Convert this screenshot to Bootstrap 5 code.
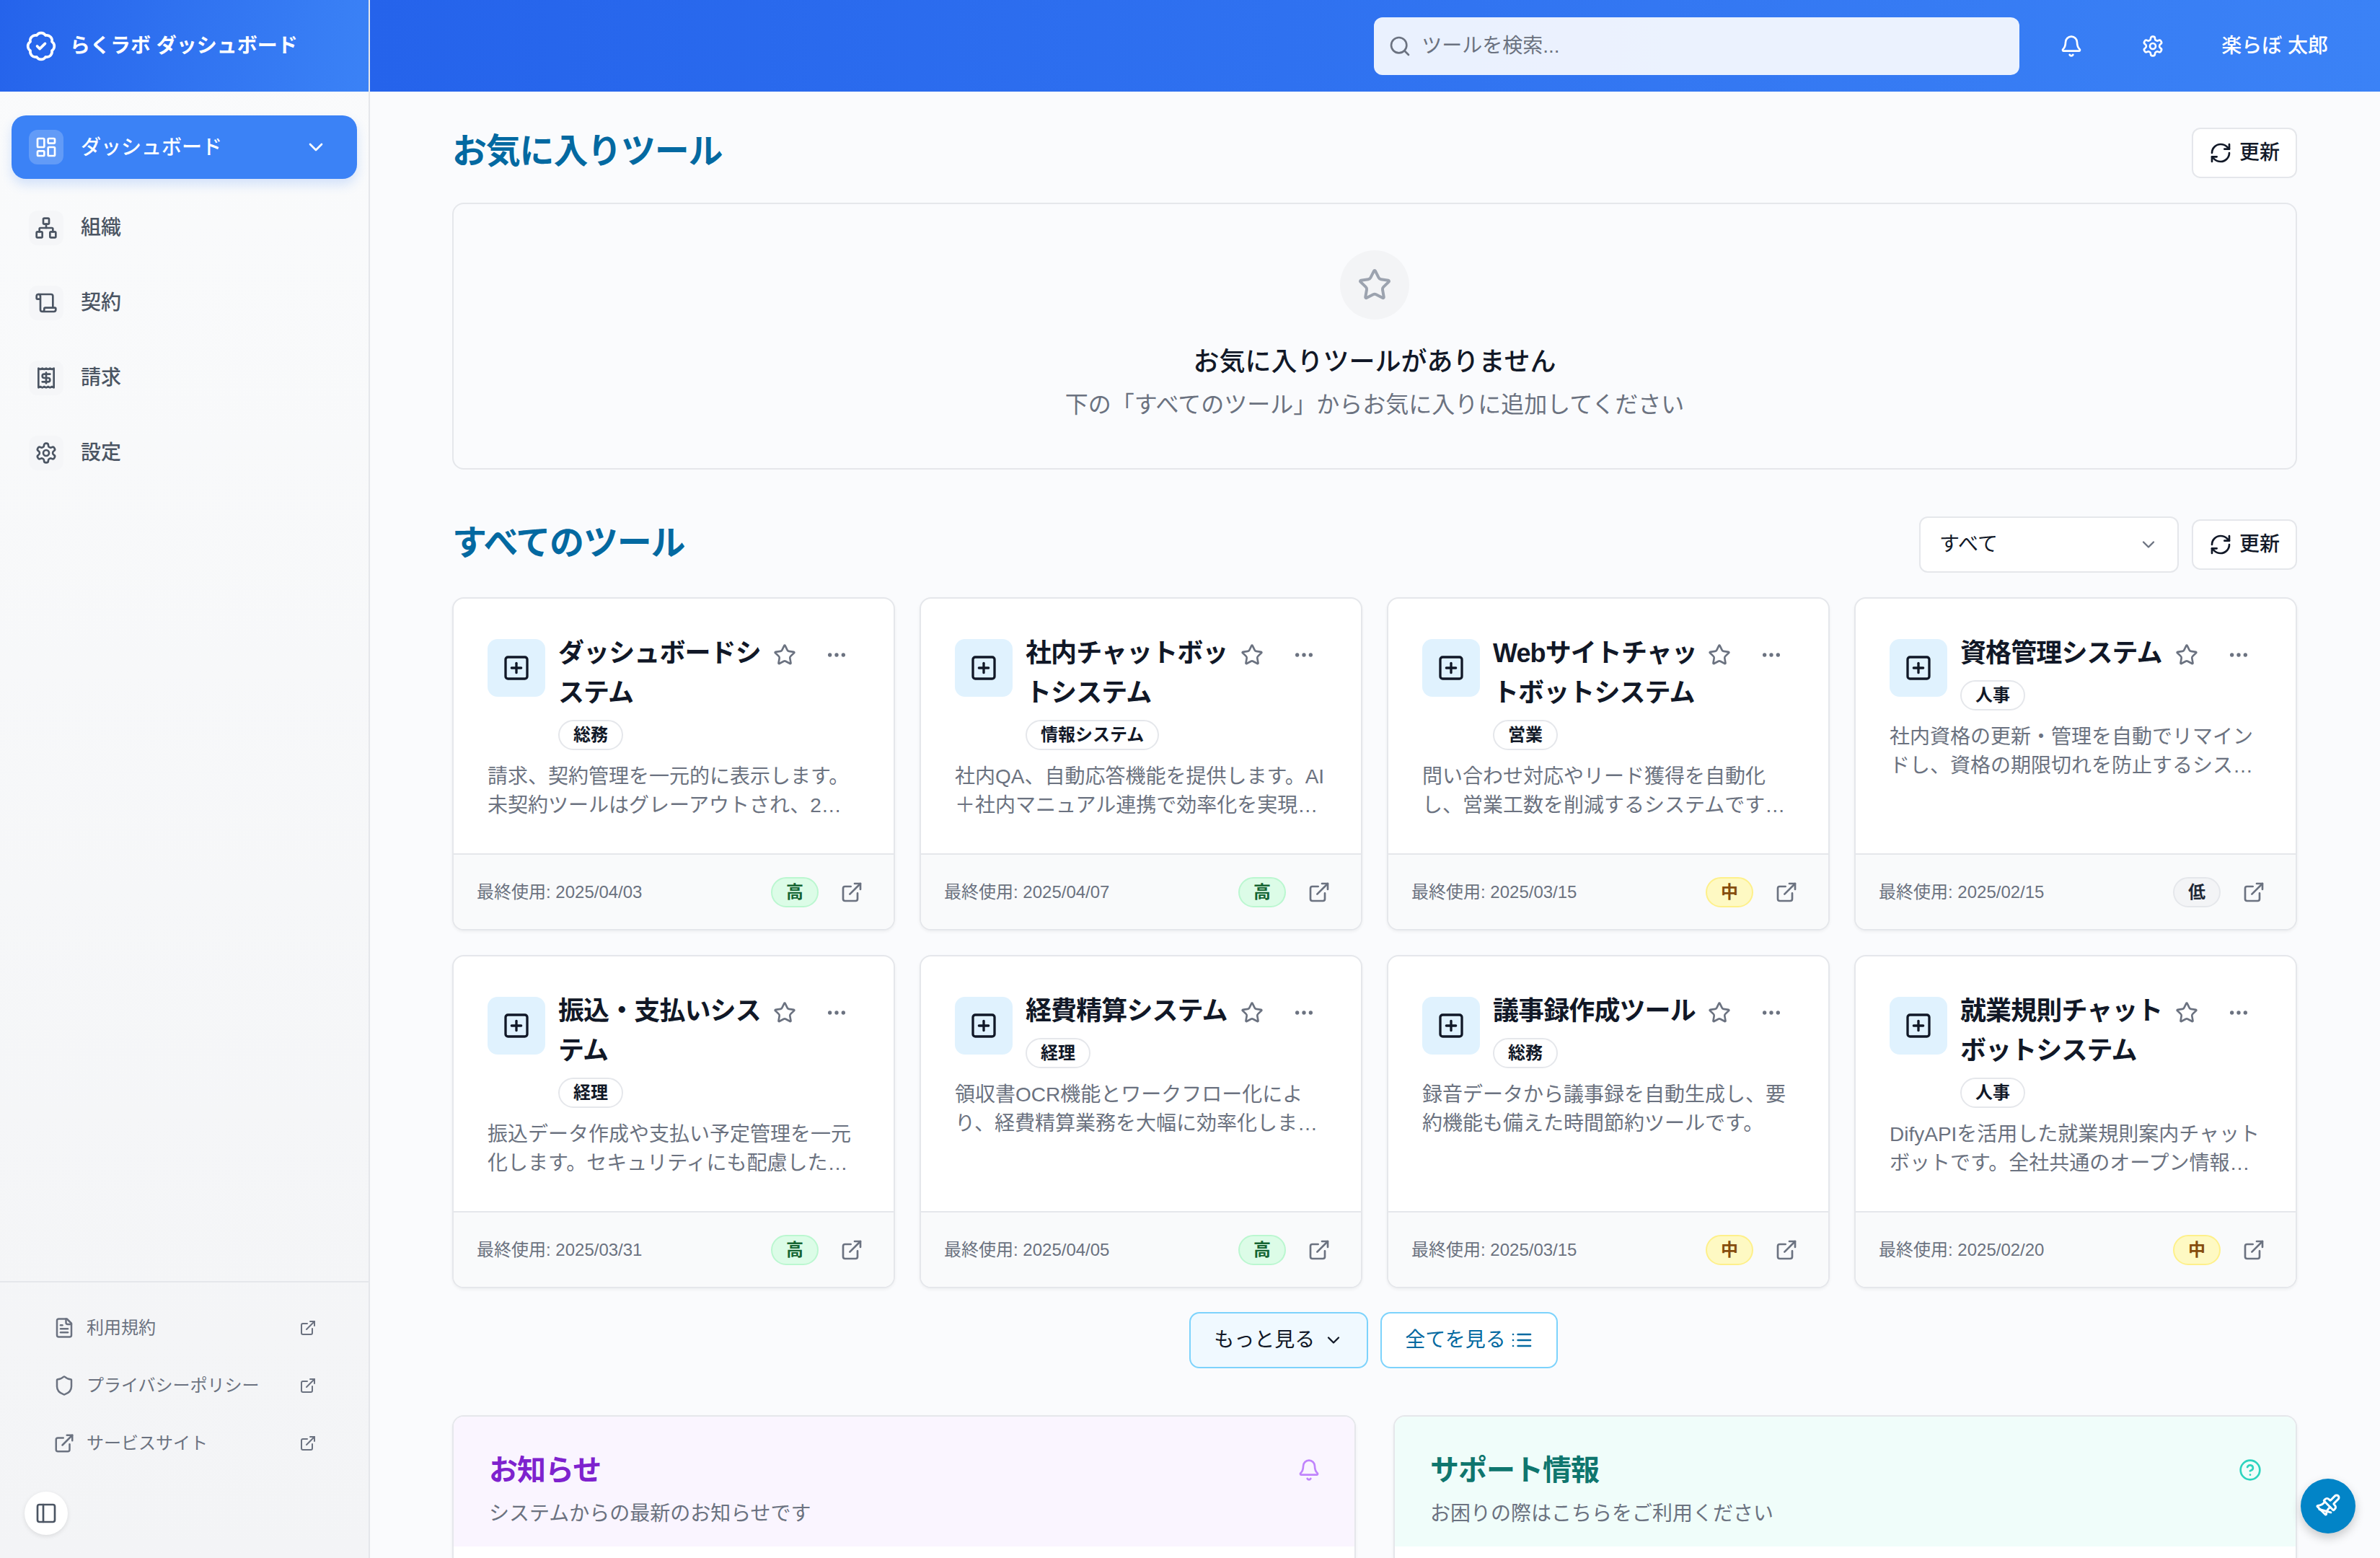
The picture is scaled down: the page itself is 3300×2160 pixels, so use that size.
<!DOCTYPE html>
<html lang="ja">
<head>
    <meta charset="UTF-8">
    <meta name="viewport" content="width=device-width, initial-scale=1.0">
    <title>らくラボ ダッシュボード</title>
    <link href="https://cdn.jsdelivr.net/npm/bootstrap@5.3.0/dist/css/bootstrap.min.css" rel="stylesheet">
    <style>
        html, body { height: 2160px; overflow: hidden; }
        body {
            font-family: "Liberation Sans", "Noto Sans CJK JP", sans-serif;
            font-size: 28px;
            color: #111827;
            background: #fafbfd;
        }
        svg.ico { fill: none; stroke: currentColor; stroke-width: 2; stroke-linecap: round; stroke-linejoin: round; flex-shrink: 0; display: block; }
        .s24 { width: 24px; height: 24px; }
        .s28 { width: 28px; height: 28px; }
        .s30 { width: 30px; height: 30px; }
        .s32 { width: 32px; height: 32px; }
        .s36 { width: 36px; height: 36px; }
        .s40 { width: 40px; height: 40px; }
        .s44 { width: 44px; height: 44px; }
        .s48 { width: 48px; height: 48px; }

        /* sidebar */
        .sidebar { width: 513px; height: 2160px; background: linear-gradient(180deg, #fafbfc, #f3f4f6); border-right: 2px solid #e5e7eb; }
        .brand { height: 127px; padding-left: 35px; gap: 18px; color: #fff; font-weight: 600; background: linear-gradient(100deg, #2563eb, #3b82f6); }
        .side-nav { padding: 33px 16px 0; }
        .side-link { height: 88px; padding: 0 24px; gap: 24px; border-radius: 20px; color: #4b5563; font-weight: 500; margin-bottom: 16px; text-decoration: none; }
        .side-link.active { background: #3b82f6; color: #fff; margin-bottom: 24px; box-shadow: 0 8px 16px rgba(59,130,246,.2); }
        .side-link.active > svg { margin-right: 17px; }
        .side-link.active .side-label { padding-top: 2px; }
        .side-icon { width: 48px; height: 48px; border-radius: 12px; background: #f5f6f8; }
        .active .side-icon { background: rgba(255,255,255,.2); }
        .side-foot { border-top: 2px solid #e5e7eb; padding: 23px 0 0; height: 384px; }
        .foot-link { height: 80px; padding: 0 72px 0 74px; gap: 16px; color: #6b7280; font-size: 24px; text-decoration: none; }
        .toggle { width: 60px; height: 60px; margin: 27px 0 0 34px; background: #fff; color: #4b5563; box-shadow: 0 2px 6px rgba(0,0,0,.1); }

        /* header */
        .topbar { height: 127px; padding-right: 72px; background: linear-gradient(90deg, #2563eb, #3b82f6); color: #fff; }
        .search { width: 895px; height: 80px; border-radius: 12px; background: rgba(255,255,255,.9); color: #6b7280; padding-left: 20px; gap: 14px; }
        .search input { border: 0; background: transparent; padding: 0; font-size: 28px; box-shadow: none; }
        .search input::placeholder { color: #6b7280; }
        .name { font-weight: 500; }

        /* main */
        .content { padding: 50px 115px 0 114px; }
        .section-title { font-size: 48px; font-weight: 700; color: #0369a1; margin: 0; padding-bottom: 4px; letter-spacing: -.025em; }
        .btn-plain { height: 70px; padding: 0 22px; gap: 10px; background: #fff; color: #111827; border: 2px solid #e5e7eb; border-radius: 12px; font-size: 28px; font-weight: 500; }
        .empty { height: 370px; background: transparent; border: 2px solid #e5e7eb; border-radius: 16px; }
        .empty-icon { width: 96px; height: 96px; background: #f3f4f6; color: #9ca3af; margin-top: 64px; }
        .empty h3 { font-size: 36px; line-height: 54px; font-weight: 500; margin: 32px 0 0; }
        .empty p { font-size: 32px; line-height: 48px; color: #6b7280; margin: 8px 0 0; }
        .filter { width: 360px; height: 78px; font-size: 28px; padding: 0 26px; border: 2px solid #e5e7eb; border-radius: 12px; color: #111827; --bs-form-select-bg-img: none;
            background-image: url("data:image/svg+xml,%3csvg xmlns='http://www.w3.org/2000/svg' viewBox='0 0 24 24' fill='none' stroke='%236b7280' stroke-width='2' stroke-linecap='round' stroke-linejoin='round'%3e%3cpath d='m6 9 6 6 6-6'/%3e%3c/svg%3e");
            background-size: 28px; background-position: right 26px center; }

        .tools { --bs-gutter-x: 34px; --bs-gutter-y: 34px; }
        .tool { height: 462px; border: 2px solid #e5e7eb; border-radius: 16px; box-shadow: 0 2px 4px rgba(0,0,0,.05); overflow: hidden; }
        .tool-body { padding: 48px 46px 0 47px; }
        .tool-icon { width: 80px; height: 80px; margin: 8px 18px 0 0; border-radius: 14px; background: #e0f2fe; }
        .tool h5 { width: 292px; font-size: 36px; line-height: 55px; font-weight: 600; margin: 0; letter-spacing: -.025em; }
        .tool-actions { gap: 40px; margin: 14px 0 0 6px; color: #6b7280; }
        .dept { height: 42px; margin-top: 10px; padding: 0 19px; background: #fff; color: #111827; font-size: 24px; font-weight: 600; border: 2px solid #e5e7eb; line-height: 38px; }
        .desc { font-size: 28px; line-height: 40px; color: #6b7280; margin: 17px 0 0; }
        .tool-foot { height: 105px; padding: 0 30px 0 32px; background: #f9fafb; border-top: 2px solid #e5e7eb; color: #6b7280; font-size: 24px; }
        .prio { width: 66px; height: 42px; line-height: 38px; padding: 0; font-size: 24px; font-weight: 600; border: 2px solid; margin-right: 30px; }
        .prio-high { background: #dcfce7; border-color: #bbf7d0; color: #166534; }
        .prio-mid { background: #fef9c3; border-color: #fef08a; color: #854d0e; }
        .prio-low { background: #f3f4f6; border-color: #e5e7eb; color: #1f2937; }
        .more-row { margin-top: 33px; gap: 17px; padding-right: 3px; }
        .btn-more { height: 78px; padding: 0 32px; gap: 12px; font-size: 28px; border: 2px solid #7dd3fc; border-radius: 14px; background: #f0f9ff; color: #111827; }
        .btn-all { background: #fff; color: #0369a1; gap: 6px; }
        .info { margin-top: 65px; gap: 52px; }
        .info-card { flex: 1; height: 198px; border: 2px solid #e5e7eb; border-bottom: 0; border-radius: 16px 16px 0 0; overflow: hidden; background: #fff; box-shadow: 0 2px 4px rgba(0,0,0,.05); }
        .info-head { height: 180px; padding: 44px 49px 0; }
        .info-head h4 { font-size: 40px; line-height: 60px; font-weight: 700; margin: 0; letter-spacing: -.025em; }
        .info-head p { font-size: 28px; line-height: 42px; color: #6b7280; margin: 10px 0 0; }
        .info-head svg { margin-right: -2px; }
        .purple { background: #faf5ff; }
        .purple h4 { color: #7e22ce; }
        .purple svg { color: #c084fc; }
        .teal { background: #f0fdfa; }
        .teal h4 { color: #0f766e; }
        .teal svg { color: #2dd4bf; }
        .fab { position: fixed; right: 34px; bottom: 34px; width: 76px; height: 76px; background: #0284c7; color: #fff; box-shadow: 0 6px 14px rgba(0,0,0,.2); }
    </style>
</head>
<body>
    <!-- icon set -->
    <svg class="d-none">
        <symbol id="i-badge" viewBox="0 0 24 24"><path d="M3.85 8.62a4 4 0 0 1 4.78-4.77 4 4 0 0 1 6.74 0 4 4 0 0 1 4.78 4.78 4 4 0 0 1 0 6.74 4 4 0 0 1-4.77 4.78 4 4 0 0 1-6.75 0 4 4 0 0 1-4.78-4.77 4 4 0 0 1 0-6.76Z"/><path d="m9 12 2 2 4-4"/></symbol>
        <symbol id="i-dash" viewBox="0 0 24 24"><rect x="3" y="3" width="7" height="9" rx="1"/><rect x="14" y="3" width="7" height="5" rx="1"/><rect x="14" y="12" width="7" height="9" rx="1"/><rect x="3" y="16" width="7" height="5" rx="1"/></symbol>
        <symbol id="i-network" viewBox="0 0 24 24"><rect x="16" y="16" width="6" height="6" rx="1"/><rect x="2" y="16" width="6" height="6" rx="1"/><rect x="9" y="2" width="6" height="6" rx="1"/><path d="M5 16v-3a1 1 0 0 1 1-1h12a1 1 0 0 1 1 1v3"/><path d="M12 12V8"/></symbol>
        <symbol id="i-scroll" viewBox="0 0 24 24"><path d="M19 17V5a2 2 0 0 0-2-2H4"/><path d="M8 21h12a2 2 0 0 0 2-2v-1a1 1 0 0 0-1-1H11a1 1 0 0 0-1 1v1a2 2 0 1 1-4 0V5a2 2 0 1 0-4 0v2a1 1 0 0 0 1 1h3"/></symbol>
        <symbol id="i-receipt" viewBox="0 0 24 24"><path d="M4 2v20l2-1 2 1 2-1 2 1 2-1 2 1 2-1 2 1V2l-2 1-2-1-2 1-2-1-2 1-2-1-2 1Z"/><path d="M16 8h-6a2 2 0 1 0 0 4h4a2 2 0 1 1 0 4H8"/><path d="M12 17.5v-11"/></symbol>
        <symbol id="i-gear" viewBox="0 0 24 24"><path d="M12.22 2h-.44a2 2 0 0 0-2 2v.18a2 2 0 0 1-1 1.73l-.43.25a2 2 0 0 1-2 0l-.15-.08a2 2 0 0 0-2.73.73l-.22.38a2 2 0 0 0 .73 2.73l.15.1a2 2 0 0 1 1 1.72v.51a2 2 0 0 1-1 1.74l-.15.09a2 2 0 0 0-.73 2.73l.22.38a2 2 0 0 0 2.73.73l.15-.08a2 2 0 0 1 2 0l.43.25a2 2 0 0 1 1 1.73V20a2 2 0 0 0 2 2h.44a2 2 0 0 0 2-2v-.18a2 2 0 0 1 1-1.73l.43-.25a2 2 0 0 1 2 0l.15.08a2 2 0 0 0 2.73-.73l.22-.39a2 2 0 0 0-.73-2.73l-.15-.08a2 2 0 0 1-1-1.74v-.5a2 2 0 0 1 1-1.74l.15-.09a2 2 0 0 0 .73-2.73l-.22-.38a2 2 0 0 0-2.73-.73l-.15.08a2 2 0 0 1-2 0l-.43-.25a2 2 0 0 1-1-1.73V4a2 2 0 0 0-2-2z"/><circle cx="12" cy="12" r="3"/></symbol>
        <symbol id="i-chev" viewBox="0 0 24 24"><path d="m6 9 6 6 6-6"/></symbol>
        <symbol id="i-ext" viewBox="0 0 24 24"><path d="M15 3h6v6"/><path d="M10 14 21 3"/><path d="M18 13v6a2 2 0 0 1-2 2H5a2 2 0 0 1-2-2V8a2 2 0 0 1 2-2h6"/></symbol>
        <symbol id="i-file" viewBox="0 0 24 24"><path d="M15 2H6a2 2 0 0 0-2 2v16a2 2 0 0 0 2 2h12a2 2 0 0 0 2-2V7Z"/><path d="M14 2v4a2 2 0 0 0 2 2h4"/><path d="M10 9H8"/><path d="M16 13H8"/><path d="M16 17H8"/></symbol>
        <symbol id="i-shield" viewBox="0 0 24 24"><path d="M20 13c0 5-3.5 7.5-7.66 8.95a1 1 0 0 1-.67-.01C7.5 20.5 4 18 4 13V6a1 1 0 0 1 1-1c2 0 4.5-1.2 6.24-2.72a1.17 1.17 0 0 1 1.52 0C14.51 3.81 17 5 19 5a1 1 0 0 1 1 1z"/></symbol>
        <symbol id="i-panel" viewBox="0 0 24 24"><rect x="3" y="3" width="18" height="18" rx="2"/><path d="M9 3v18"/></symbol>
        <symbol id="i-search" viewBox="0 0 24 24"><circle cx="11" cy="11" r="8"/><path d="m21 21-4.3-4.3"/></symbol>
        <symbol id="i-bell" viewBox="0 0 24 24"><path d="M10.268 21a2 2 0 0 0 3.464 0"/><path d="M3.262 15.326A1 1 0 0 0 4 17h16a1 1 0 0 0 .74-1.673C19.41 13.956 18 12.499 18 8A6 6 0 0 0 6 8c0 4.499-1.411 5.956-2.738 7.326"/></symbol>
        <symbol id="i-refresh" viewBox="0 0 24 24"><path d="M3 12a9 9 0 0 1 9-9 9.75 9.75 0 0 1 6.74 2.74L21 8"/><path d="M21 3v5h-5"/><path d="M21 12a9 9 0 0 1-9 9 9.75 9.75 0 0 1-6.74-2.74L3 16"/><path d="M8 16H3v5"/></symbol>
        <symbol id="i-star" viewBox="0 0 24 24"><path d="M11.525 2.295a.53.53 0 0 1 .95 0l2.31 4.679a2.123 2.123 0 0 0 1.595 1.16l5.166.756a.53.53 0 0 1 .294.904l-3.736 3.638a2.123 2.123 0 0 0-.611 1.878l.882 5.14a.53.53 0 0 1-.771.56l-4.618-2.428a2.122 2.122 0 0 0-1.973 0L6.396 21.01a.53.53 0 0 1-.77-.56l.881-5.139a2.122 2.122 0 0 0-.611-1.879L2.16 9.795a.53.53 0 0 1 .294-.906l5.165-.755a2.122 2.122 0 0 0 1.597-1.16z"/></symbol>
        <symbol id="i-dots" viewBox="0 0 24 24"><circle cx="12" cy="12" r="1"/><circle cx="19" cy="12" r="1"/><circle cx="5" cy="12" r="1"/></symbol>
        <symbol id="i-plus" viewBox="0 0 24 24"><rect x="3" y="3" width="18" height="18" rx="2"/><path d="M8 12h8"/><path d="M12 8v8"/></symbol>
        <symbol id="i-list" viewBox="0 0 24 24"><path d="M3 12h.01"/><path d="M3 18h.01"/><path d="M3 6h.01"/><path d="M8 12h13"/><path d="M8 18h13"/><path d="M8 6h13"/></symbol>
        <symbol id="i-help" viewBox="0 0 24 24"><circle cx="12" cy="12" r="10"/><path d="M9.09 9a3 3 0 0 1 5.83 1c0 2-3 3-3 3"/><path d="M12 17h.01"/></symbol>
        <symbol id="i-brush" viewBox="0 0 24 24"><path d="m14.622 17.897-10.68-2.913"/><path d="M18.376 2.622a1 1 0 1 1 3.002 3.002L17.36 9.643a.5.5 0 0 0 0 .707l.944.944a2.41 2.41 0 0 1 0 3.408l-.944.944a.5.5 0 0 1-.707 0L8.354 7.348a.5.5 0 0 1 0-.707l.944-.944a2.41 2.41 0 0 1 3.408 0l.944.944a.5.5 0 0 0 .707 0z"/><path d="M9 8c-1.804 2.71-3.97 3.346-6.583 3.612a.5.5 0 0 0-.302.852l7.356 7.355a.5.5 0 0 0 .851-.3C10.611 17.033 11.26 14.81 14 13"/></symbol>
    </svg>

    <div class="d-flex">
        <aside class="sidebar d-flex flex-column flex-shrink-0">
            <div class="brand d-flex align-items-center">
                <svg class="ico s44"><use href="#i-badge"/></svg>
                <span>らくラボ ダッシュボード</span>
            </div>
            <nav class="side-nav flex-grow-1" id="sideNav"></nav>
            <div class="side-foot">
                <div id="footLinks"></div>
                <button class="toggle btn rounded-circle d-flex align-items-center justify-content-center p-0 border-0">
                    <svg class="ico s32"><use href="#i-panel"/></svg>
                </button>
            </div>
        </aside>

        <div class="flex-grow-1 overflow-hidden">
            <header class="topbar d-flex align-items-center">
                <div class="search d-flex align-items-center ms-auto">
                    <svg class="ico s32"><use href="#i-search"/></svg>
                    <input class="form-control" placeholder="ツールを検索...">
                </div>
                <svg class="ico s32" style="margin-left:56px"><use href="#i-bell"/></svg>
                <svg class="ico s32" style="margin-left:81px"><use href="#i-gear"/></svg>
                <span class="name" style="margin-left:79px">楽らぼ 太郎</span>
            </header>

            <main class="content">
                <div class="d-flex align-items-center justify-content-between">
                    <h2 class="section-title">お気に入りツール</h2>
                    <button class="btn btn-plain d-flex align-items-center"><svg class="ico s32"><use href="#i-refresh"/></svg>更新</button>
                </div>
                <div class="empty d-flex flex-column align-items-center text-center" style="margin-top:34px">
                    <div class="empty-icon rounded-circle d-flex align-items-center justify-content-center">
                        <svg class="ico s48"><use href="#i-star"/></svg>
                    </div>
                    <h3>お気に入りツールがありません</h3>
                    <p>下の「すべてのツール」からお気に入りに追加してください</p>
                </div>

                <div class="d-flex align-items-center justify-content-between" style="margin:65px 0 34px">
                    <h2 class="section-title">すべてのツール</h2>
                    <div class="d-flex align-items-center" style="gap:18px">
                        <select class="form-select filter"><option>すべて</option></select>
                        <button class="btn btn-plain d-flex align-items-center"><svg class="ico s32"><use href="#i-refresh"/></svg>更新</button>
                    </div>
                </div>

                <div class="row row-cols-4 tools" id="toolGrid"></div>

                <div class="more-row d-flex justify-content-center">
                    <button class="btn btn-more d-flex align-items-center">もっと見る<svg class="ico s28"><use href="#i-chev"/></svg></button>
                    <button class="btn btn-more btn-all d-flex align-items-center">全てを見る<svg class="ico s32"><use href="#i-list"/></svg></button>
                </div>

                <div class="info d-flex">
                    <div class="info-card">
                        <div class="info-head purple">
                            <div class="d-flex align-items-center justify-content-between"><h4>お知らせ</h4><svg class="ico s32"><use href="#i-bell"/></svg></div>
                            <p>システムからの最新のお知らせです</p>
                        </div>
                    </div>
                    <div class="info-card">
                        <div class="info-head teal">
                            <div class="d-flex align-items-center justify-content-between"><h4>サポート情報</h4><svg class="ico s32"><use href="#i-help"/></svg></div>
                            <p>お困りの際はこちらをご利用ください</p>
                        </div>
                    </div>
                </div>
            </main>
        </div>
    </div>

    <button class="fab btn rounded-circle d-flex align-items-center justify-content-center p-0 border-0">
        <svg class="ico s36"><use href="#i-brush"/></svg>
    </button>

    <script>
        const sideItems = [
            ['i-dash', 'ダッシュボード', true],
            ['i-network', '組織'],
            ['i-scroll', '契約'],
            ['i-receipt', '請求'],
            ['i-gear', '設定']
        ];
        const footItems = [
            ['i-file', '利用規約'],
            ['i-shield', 'プライバシーポリシー'],
            ['i-ext', 'サービスサイト']
        ];
        const tools = [
            { name: 'ダッシュボードシステム', dept: '総務', desc: '請求、契約管理を一元的に表示します。未契約ツールはグレーアウトされ、2…', date: '2025/04/03', prio: '高' },
            { name: '社内チャットボットシステム', dept: '情報システム', desc: '社内QA、自動応答機能を提供します。AI＋社内マニュアル連携で効率化を実現…', date: '2025/04/07', prio: '高' },
            { name: 'Webサイトチャットボットシステム', dept: '営業', desc: '問い合わせ対応やリード獲得を自動化し、営業工数を削減するシステムです…', date: '2025/03/15', prio: '中' },
            { name: '資格管理システム', dept: '人事', desc: '社内資格の更新・管理を自動でリマインドし、資格の期限切れを防止するシス…', date: '2025/02/15', prio: '低' },
            { name: '振込・支払いシステム', dept: '経理', desc: '振込データ作成や支払い予定管理を一元化します。セキュリティにも配慮した…', date: '2025/03/31', prio: '高' },
            { name: '経費精算システム', dept: '経理', desc: '領収書OCR機能とワークフロー化により、経費精算業務を大幅に効率化しま…', date: '2025/04/05', prio: '高' },
            { name: '議事録作成ツール', dept: '総務', desc: '録音データから議事録を自動生成し、要約機能も備えた時間節約ツールです。', date: '2025/03/15', prio: '中' },
            { name: '就業規則チャットボットシステム', dept: '人事', desc: 'DifyAPIを活用した就業規則案内チャットボットです。全社共通のオープン情報…', date: '2025/02/20', prio: '中' }
        ];
        const prioClass = { '高': 'prio-high', '中': 'prio-mid', '低': 'prio-low' };

        // Sidebar
        document.getElementById('sideNav').innerHTML = sideItems.map(([icon, label, active]) => `
            <a href="#" class="side-link d-flex align-items-center ${active ? 'active' : ''}">
                <span class="side-icon d-flex align-items-center justify-content-center"><svg class="ico s32"><use href="#${icon}"/></svg></span>
                <span class="side-label flex-grow-1">${label}</span>
                ${active ? '<svg class="ico s32"><use href="#i-chev"/></svg>' : ''}
            </a>`).join('');

        document.getElementById('footLinks').innerHTML = footItems.map(([icon, label]) => `
            <a href="#" class="foot-link d-flex align-items-center">
                <svg class="ico s30"><use href="#${icon}"/></svg>
                <span class="flex-grow-1">${label}</span>
                <svg class="ico s24"><use href="#i-ext"/></svg>
            </a>`).join('');

        // Tool cards
        document.getElementById('toolGrid').innerHTML = tools.map(tool => `
            <div class="col">
                <div class="card tool">
                    <div class="tool-body flex-grow-1">
                        <div class="d-flex align-items-start">
                            <div class="tool-icon d-flex align-items-center justify-content-center flex-shrink-0"><svg class="ico s40"><use href="#i-plus"/></svg></div>
                            <div>
                                <h5>${tool.name}</h5>
                                <span class="badge rounded-pill dept d-inline-block">${tool.dept}</span>
                            </div>
                            <div class="tool-actions d-flex align-items-center">
                                <svg class="ico s32"><use href="#i-star"/></svg>
                                <svg class="ico s32"><use href="#i-dots"/></svg>
                            </div>
                        </div>
                        <p class="desc">${tool.desc}</p>
                    </div>
                    <div class="tool-foot d-flex align-items-center">
                        <span class="flex-grow-1">最終使用: ${tool.date}</span>
                        <span class="badge rounded-pill prio ${prioClass[tool.prio]}">${tool.prio}</span>
                        <svg class="ico s32" style="margin-right:12px"><use href="#i-ext"/></svg>
                    </div>
                </div>
            </div>`).join('');
    </script>
</body>
</html>
